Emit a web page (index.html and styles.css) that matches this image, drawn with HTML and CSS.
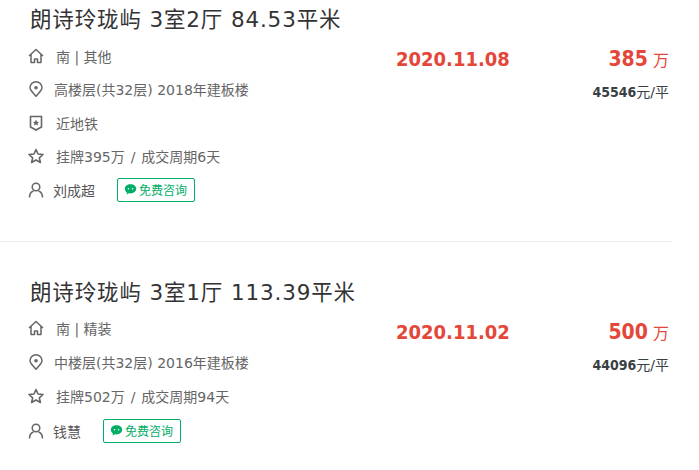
FILE: index.html
```html
<!DOCTYPE html>
<html lang="zh-CN">
  <head>
    <meta charset="UTF-8" />
    <title>朗诗玲珑屿 成交记录</title>
    <link rel="stylesheet" href="styles.css">
  </head>
  <body>
    <svg class="defs" width="0" height="0">
      <symbol id="i-home" viewBox="0 0 16 16">
        <path d="M1 8 8 1.500 15 8M3 6.500V14.500H6.500V11H9.500V14.500H13V6.500" fill="none" stroke="currentColor" stroke-width="1.500" stroke-linejoin="round" />
      </symbol>
      <symbol id="i-pin" viewBox="0 0 16 16">
        <path d="M8 15.200C5 11.500 2 9.500 2 6.800A6 6 0 0 1 14 6.800C14 9.500 11 11.500 8 15.200Z" fill="none" stroke="currentColor" stroke-width="1.500" />
        <circle cx="8" cy="6.800" r="1.800" fill="currentColor" />
      </symbol>
      <symbol id="i-badge" viewBox="0 0 16 16">
        <path d="M2.500 1.500H13.500V12L8 15 2.500 12Z" fill="none" stroke="currentColor" stroke-width="1.600" />
        <path d="M8 4.500 9 6.800 11 7 9.500 8.500 10 10.500 8 9.400 6 10.500 6.500 8.500 5 7 7 6.800Z" fill="currentColor" />
      </symbol>
      <symbol id="i-star" viewBox="0 0 16 16">
        <path d="M8 1.500 10 6 15 6.500 11.300 9.800 12.400 14.500 8 12 3.600 14.500 4.700 9.800 1 6.500 6 6Z" fill="none" stroke="currentColor" stroke-width="1.600" stroke-linejoin="round" />
      </symbol>
      <symbol id="i-user" viewBox="0 0 16 16">
        <circle cx="8" cy="5" r="3.800" fill="none" stroke="currentColor" stroke-width="1.500" />
        <path d="M1.500 15.500C1.500 11.500 4 9.500 5.500 9M14.500 15.500C14.500 11.500 12 9.500 10.500 9" fill="none" stroke="currentColor" stroke-width="1.500" />
      </symbol>
      <symbol id="i-chat" viewBox="0 0 16 16">
        <path d="M8 1.500C3.900 1.500 1 4 1 7.200 1 9 2 10.600 3.600 11.600L3.200 14 6 12.700C6.600 12.800 7.300 12.900 8 12.900 12.100 12.900 15 10.400 15 7.200S12.100 1.500 8 1.500Z" fill="currentColor" />
        <circle cx="5.500" cy="7" r="1" fill="#fff" />
        <circle cx="10.500" cy="7" r="1" fill="#fff" />
      </symbol>
    </svg>

    <div class="list">
      <div class="house">
        <div class="info">
          <h2 class="title">朗诗玲珑屿 3室2厅 84.53平米</h2>
          <div class="row"><svg class="icon"><use href="#i-home" /></svg><span class="text">南 | 其他</span></div>
          <div class="row"><svg class="icon"><use href="#i-pin" /></svg><span class="text tight">高楼层(共32层) 2018年建板楼</span></div>
          <div class="row"><svg class="icon"><use href="#i-badge" /></svg><span class="text">近地铁</span></div>
          <div class="row"><svg class="icon"><use href="#i-star" /></svg><span class="text">挂牌395万 <span class="sep">/</span> 成交周期6天</span></div>
          <div class="row">
            <svg class="icon"><use href="#i-user" /></svg><span class="text agent">刘成超</span>
            <a class="consult"><svg class="chat"><use href="#i-chat" /></svg>免费咨询</a>
          </div>
        </div>
        <div class="date">2020.11.08</div>
        <div class="price">
          <div class="total"><b>385</b> 万</div>
          <div class="unit"><b>45546</b>元/平</div>
        </div>
      </div>

      <div class="house">
        <div class="info">
          <h2 class="title">朗诗玲珑屿 3室1厅 113.39平米</h2>
          <div class="row"><svg class="icon"><use href="#i-home" /></svg><span class="text">南 | 精装</span></div>
          <div class="row"><svg class="icon"><use href="#i-pin" /></svg><span class="text tight">中楼层(共32层) 2016年建板楼</span></div>
          <div class="row"><svg class="icon"><use href="#i-star" /></svg><span class="text">挂牌502万 <span class="sep">/</span> 成交周期94天</span></div>
          <div class="row">
            <svg class="icon"><use href="#i-user" /></svg><span class="text agent">钱慧</span>
            <a class="consult"><svg class="chat"><use href="#i-chat" /></svg>免费咨询</a>
          </div>
        </div>
        <div class="date">2020.11.02</div>
        <div class="price">
          <div class="total"><b>500</b> 万</div>
          <div class="unit"><b>44096</b>元/平</div>
        </div>
      </div>
    </div>
  </body>
</html>
```

FILE: styles.css
```css
* {
  margin: 0;
  padding: 0;
  box-sizing: border-box;
}

body {
  background-color: white;
  font-family: "DejaVu Sans", "Noto Sans CJK SC", sans-serif;
  font-size: 14px;
  color: #666;
  overflow: hidden;
}

.defs {
  position: absolute;
}

.list {
  width: 672px;
}

.house {
  display: grid;
  grid-template-columns: 396px 1fr auto;
  padding: 7px 3px 34px 0;
  border-bottom: 1px solid #eee;
}

.house + .house {
  padding-top: 38px;
  border-bottom: 0;
}

.house + .house .title {
  margin-bottom: 5px;
}

.house + .house .row {
  height: 34px;
}

.house + .house .row:last-child {
  height: 36px;
}

.info {
  padding-left: 28px;
}

.title {
  padding-left: 2px;
  margin-bottom: 6px;
  font-size: 21.500px;
  line-height: 26px;
  letter-spacing: 0.850px;
  font-weight: normal;
  white-space: nowrap;
  color: #333;
}

.row {
  display: flex;
  align-items: center;
  height: 33.500px;
}

.icon {
  width: 16px;
  height: 16px;
  margin-right: 12px;
  color: #666;
  flex-shrink: 0;
}

.tight {
  margin-left: -2px;
}

.sep {
  margin: 0 1.500px;
}

.agent {
  margin-left: -3px;
  margin-right: 22px;
  color: #555;
}

.consult {
  display: flex;
  align-items: center;
  width: 78px;
  height: 24px;
  padding-left: 6px;
  border: 1px solid #00ae66;
  border-radius: 2px;
  font-size: 12px;
  color: #00ae66;
}

.chat {
  width: 13px;
  height: 13px;
  margin-right: 2px;
  color: #00ae66;
}

.date {
  margin-top: 39px;
  font-size: 20px;
  line-height: 26px;
  font-weight: bold;
  font-stretch: condensed;
  color: #e4473a;
}

.price {
  margin-top: 39px;
  text-align: right;
}

.total {
  font-size: 16px;
  line-height: 26px;
  color: #e4473a;
}

.total b {
  font-size: 21px;
  font-stretch: condensed;
}

.unit {
  margin-top: 8px;
  font-size: 14px;
  line-height: 20px;
  color: #394043;
}

.unit b {
  font-stretch: condensed;
}
```
